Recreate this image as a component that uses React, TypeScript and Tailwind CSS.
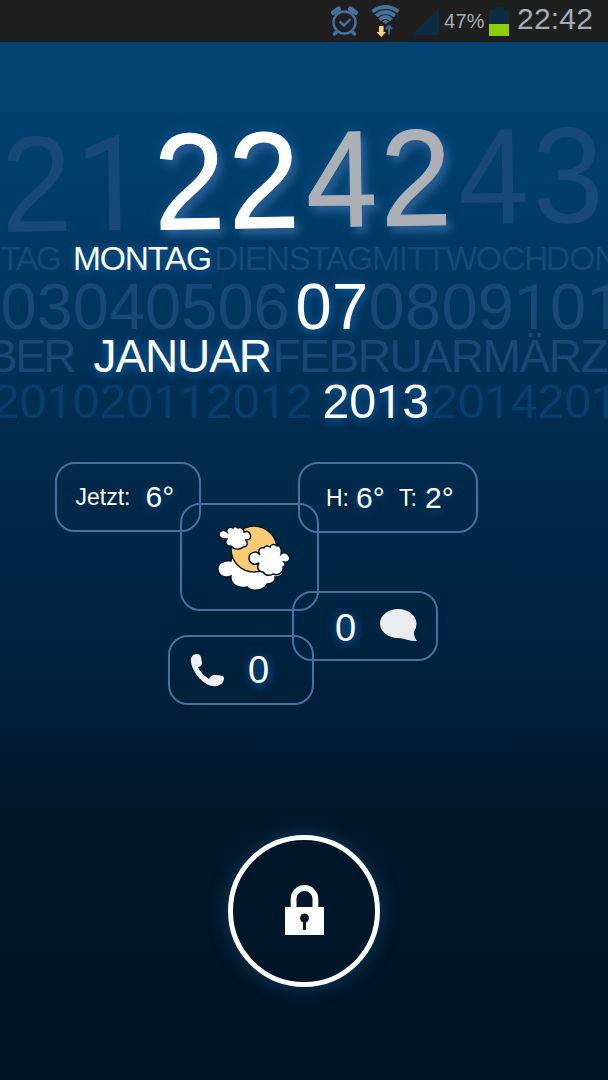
import type { ReactNode } from "react";
import clsx from "clsx";

const LIT = "text-white [text-shadow:0_0_12px_#0d5596,2px_3px_9px_#0d5596]";
const DIM = "text-[#174876]";
const HOUR_GLOW = "[-webkit-text-stroke:1px_currentColor] [text-shadow:5px_6px_9px_#2d5f94,0_0_14px_#0d5596]";

function Digits({ value }: { value: string }) {
  return (
    <>
      {value.split("").map((c, i) =>
        c === "1" ? (
          <span key={i} className="font-['Roboto'] text-[0.97em]">
            1
          </span>
        ) : (
          c
        )
      )}
    </>
  );
}

function StatusBar() {
  return (
    <header className="flex h-[42px] items-center bg-[#1f1f1f] pl-[330px] text-[#a3acb5]">
      <svg className="h-[30px] w-[29px] shrink-0" viewBox="0 0 29 30" fill="none" stroke="#45719f">
        <circle cx="14.5" cy="16.500" r="11" strokeWidth="2.400" />
        <path d="M9.500 15.500l4.500 4 6.500-6.500" strokeWidth="2.400" />
        <path d="M3.500 6.500L8.500 3M25.500 6.500L20.500 3" strokeWidth="5" strokeLinecap="round" />
        <path d="M6.500 26l-2 2M22.500 26l2 2" strokeWidth="3.400" strokeLinecap="round" />
      </svg>
      <svg className="ml-[12px] h-[32px] w-[29px] shrink-0" viewBox="0 0 29 32" fill="none">
        <g stroke="#45719f" strokeWidth="3.900">
          <path d="M1.500 6.500Q14.500-2.500 27.500 6.500" />
          <path d="M5 10.800Q14.500 3 24 10.800" />
          <path d="M8.500 14.800Q14.500 9 20.500 14.800" />
        </g>
        <path d="M11 16.500Q14.500 13.500 18 16.500L14.500 19z" fill="#45719f" />
        <path d="M8 21h4.500v6H15L10.200 32 5.500 27H8z" fill="#ffd27a" />
        <path d="M18 29.500V21M14.800 24l3.200-3.200 3.200 3.200" stroke="#2f679c" strokeWidth="2" />
      </svg>
      <svg className="ml-[12px] h-[27px] w-[27px] shrink-0" viewBox="0 0 27 27">
        <path d="M27 0v27H0z" fill="#0b2b42" />
      </svg>
      <span className="ml-[5px] w-[41px] text-[20px] leading-[42px] tracking-[0.3px]">47%</span>
      <div className="ml-[4px] flex shrink-0 flex-col items-center">
        <div className="h-[3px] w-[9px] bg-[#0b2b42]" />
        <div className="h-[14px] w-[20px] bg-[#0b2b42]" />
        <div className="h-[12px] w-[20px] bg-[#8fd100]" />
      </div>
      <span className="ml-[8px] pb-[5px] text-[30px] leading-[37px] tracking-[0.2px]">22:42</span>
    </header>
  );
}

function Clock() {
  return (
    <section className="whitespace-nowrap">
      {/* the hour strip climbs slightly to the right */}
      <div className="mt-[73px] flex h-[130px] rotate-[-0.95deg] pl-[1px] text-[137px] leading-[130px] tracking-[4px]">
        <span className={clsx("w-[153px] shrink-0 origin-left scale-x-[0.93]", DIM)}>
          <Digits value="21" />
        </span>
        <span className={clsx("w-[152px] shrink-0 origin-left scale-x-[0.93] text-white", HOUR_GLOW)}>22</span>
        <span className={clsx("w-[152px] shrink-0 origin-left scale-x-[0.93] text-[#adb1b5]", HOUR_GLOW)}>42</span>
        <span className={clsx("w-[149px] shrink-0 origin-left scale-x-[0.93]", DIM)}>43</span>
      </div>
      <div className="flex h-[27px] text-[33.5px] leading-[27px]">
        <span className={clsx("w-[73px] shrink-0 tracking-[-2.300px]", DIM)}>TAG</span>
        <span className={clsx("w-[141px] shrink-0 tracking-[-1.100px]", LIT)}>MONTAG</span>
        <span className={clsx("w-[158px] shrink-0 tracking-[-1.400px]", DIM)}>DIENSTAG</span>
        <span className={clsx("w-[174px] shrink-0 tracking-[-1.150px]", DIM)}>MITTWOCH</span>
        <span className={clsx("shrink-0 tracking-[-1px]", DIM)}>DONNERSTAG</span>
      </div>
      <div className="flex h-[70px] text-[65px] leading-[70px] tracking-[0.300px]">
        <span className={clsx("w-[295.500px] shrink-0 pl-[0.500px] tracking-[0px]", DIM)}>03040506</span>
        <span className={clsx("w-[73px] shrink-0", LIT)}>07</span>
        <span className={clsx("shrink-0", DIM)}>
          <Digits value="08091011" />
        </span>
      </div>
      <div className="flex h-[28px] text-[46px] leading-[28px]">
        <span className={clsx("-ml-[13px] w-[106.500px] shrink-0 tracking-[-2.500px]", DIM)}>BER</span>
        <span className={clsx("w-[179px] shrink-0 tracking-[-1.100px]", LIT)}>JANUAR</span>
        <span className={clsx("shrink-0 tracking-[-1.400px]", DIM)}>FEBRUARMÄRZAPRIL</span>
      </div>
      <div className="flex h-[62px] text-[48.5px] leading-[62px] tracking-[-0.200px]">
        <span className="-ml-[7.500px] w-[330px] shrink-0 tracking-[-0.100px] text-[#063f6d]">
          <Digits value="201020112012" />
        </span>
        <span className={clsx("w-[108.500px] shrink-0", LIT)}>
          <Digits value="2013" />
        </span>
        <span className="shrink-0 text-[#063f6d]">
          <Digits value="20142015" />
        </span>
      </div>
    </section>
  );
}

function Tile({ className, children }: { className: string; children: ReactNode }) {
  return (
    <div className={clsx("flex shrink-0 items-center rounded-[20px] border-2 border-[#44739f]", className)}>
      {children}
    </div>
  );
}

function WeatherIcon() {
  return (
    <svg className="h-[70px] w-[76px]" viewBox="0 0 76 70" stroke="#001a30" strokeWidth="1.500">
      <path
        d="M20 36c-2-2-4 0-4 3-7-1-14 2-13 9s9 8 13 6c-1 9 8 13 16 11 4 5 17 4 20-3 5 0 9-3 8-7 6 0 8-3 8-5z"
        fill="#fdfdfd"
      />
      <circle cx="39" cy="27" r="23" fill="#fbcb73" />
      <path
        d="M12 10c-5-4-10 1-7 5 2 3 5 2 7 2-3 4 0 8 4 7 3 4 10 4 12 1 5 0 5-4 3-7 4 0 6-3 4-6-1-3-4-3-6-2 0-4-4-5-6-4-2-2-5-1-5 0-4-2-7 1-6 4z"
        fill="#fdfdfd"
      />
      <path
        d="M45 33c-3-5-11-3-11 3 0 5 5 8 10 5-3 5 0 9 4 9 3 5 9 3 10 2 5 2 11-1 10-7 3-1 2-4 1-5 5 1 7-3 5-6-2-4-6-4-8-2 1-5-1-9-4-8-3-3-7-1-7 1-3-2-5-1-6 1-4-1-7 2-4 7z"
        fill="#fdfdfd"
      />
    </svg>
  );
}

function Tiles() {
  const value = clsx("text-[38px] leading-none", LIT);
  return (
    <section className="mt-[30px] flex flex-col items-start whitespace-nowrap text-white">
      <div className="flex">
        <Tile className="ml-[55px] h-[70px] w-[146px] pl-[18.5px]">
          <span className="w-[70px] text-[23px]">Jetzt:</span>
          <span className="pb-[2px] text-[30px] [text-shadow:0_2px_8px_#0a4d85]">6°</span>
        </Tile>
        <Tile className="ml-[97px] h-[71px] w-[180px] pl-[26px]">
          <span className="w-[30px] pt-[2px] text-[23px]">H:</span>
          <span className="w-[43px] text-[30px] [text-shadow:0_2px_8px_#0a4d85]">6°</span>
          <span className="w-[26px] pt-[2px] text-[23px]">T:</span>
          <span className="text-[30px] [text-shadow:0_2px_8px_#0a4d85]">2°</span>
        </Tile>
      </div>
      <Tile className="-mt-[30px] ml-[180px] h-[108px] w-[139px] pl-[33px]">
        <WeatherIcon />
      </Tile>
      <Tile className="-mt-[20px] ml-[292px] h-[70px] w-[146px] pt-[4px] pl-[41px]">
        <span className={value}>0</span>
        <svg className="mb-[6px] ml-[23px] h-[34px] w-[39px]" viewBox="0 0 39 34">
          <path
            d="M19 1C9 1 1 7.500 1 15.500S9 30 19 30q4 0 8 1.500 5 1.500 11 1.500-3-3.500-3-9 2.500-4 2.500-8.500C37.500 7.500 29 1 19 1z"
            fill="#e9edf1"
          />
        </svg>
      </Tile>
      <Tile className="-mt-[26px] ml-[168px] h-[70px] w-[146px] pl-[20px]">
        <svg className="h-[34px] w-[34px]" viewBox="0 0 34 34">
          <path
            d="M3 2Q9-1 11 4l1 6q0 3-4 4 3 7 11 12 2-4 5-4 5 0 9 1 2 2 0 6-3 5-11 4Q13 31 6 21 0 12 1 5z"
            fill="#eef0f3"
          />
        </svg>
        <span className={clsx("ml-[24px]", value)}>0</span>
      </Tile>
    </section>
  );
}

function LockRing() {
  return (
    <div className="mx-auto mt-[130px] flex size-[152px] items-center justify-center rounded-full border-[5px] border-white [box-shadow:0_0_14px_5px_#092c48]">
      <svg className="mb-[2px] h-[50px] w-[39px]" viewBox="0 0 39 50">
        <path d="M8.600 24V13.900a10.900 10.900 0 0 1 21.800 0v10" fill="none" stroke="#fff" strokeWidth="5.800" />
        <path d="M0 22h39v28H0z" fill="#fff" />
        <circle cx="19.500" cy="33" r="4.500" fill="#00172b" />
        <path d="M18 34h3v11h-3z" fill="#00172b" />
      </svg>
    </div>
  );
}

export default function App() {
  return (
    <main className="h-[1080px] w-[608px] overflow-hidden bg-[linear-gradient(180deg,#034373_0%,#003f6b_16%,#00355c_29%,#002a4b_42%,#002543_55%,#001e37_66%,#00172b_75%,#001427_100%)] font-['Liberation_Sans',Arial,sans-serif]">
      <StatusBar />
      <Clock />
      <Tiles />
      <LockRing />
    </main>
  );
}
